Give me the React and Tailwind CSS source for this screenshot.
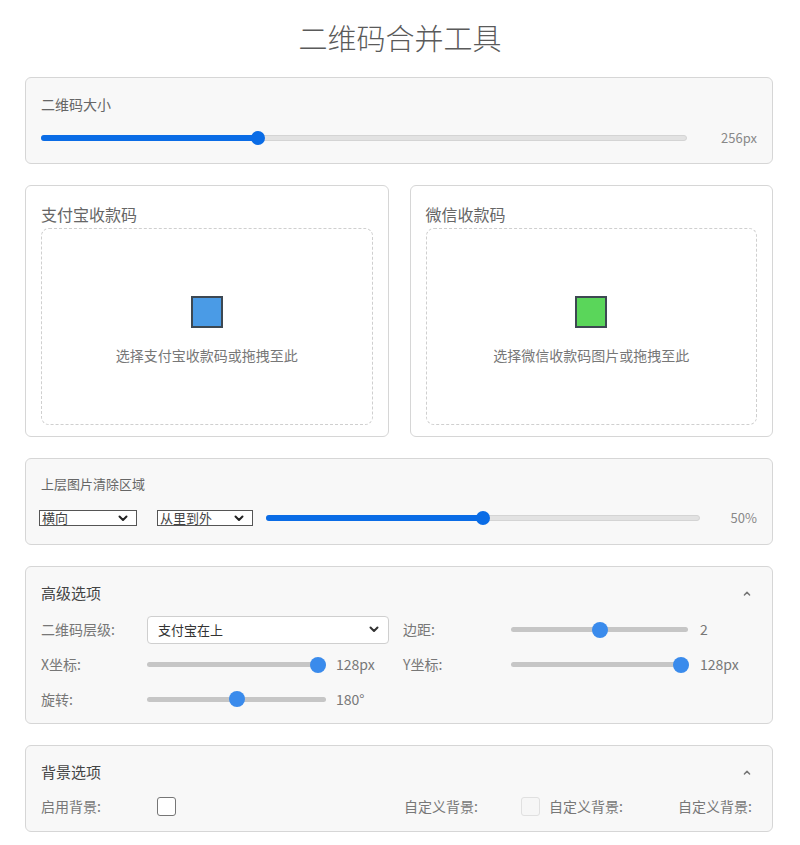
import React from 'react';

function Chevron({ up = false, className = '' }) {
	return (
		<svg width="10" height="7" viewBox="0 0 10 7" className={className} fill="none">
			<path
				d={up ? 'M1.5 5.5L5 2L8.5 5.5' : 'M1.5 1.5L5 5L8.5 1.5'}
				stroke="currentColor"
				strokeWidth="2"
				strokeLinecap="round"
				strokeLinejoin="round"
			/>
		</svg>
	);
}

// Slider drawn with divs; thumb position computed from pct
function Slider({ pct, filled = false, thumb = 14, track = 'h-[6px]', className = '' }) {
	const r = thumb / 2;
	const left = `calc(${r}px + ${pct / 100} * (100% - ${thumb}px))`;
	return (
		<div className={`relative h-[20px] flex items-center ${className}`}>
			<div className={`w-full ${track} rounded-full ${filled ? 'bg-[#e2e2e2] border border-[#d4d4d4]' : 'bg-[#c6c6c6]'}`} />
			{filled && (
				<div className={`absolute left-0 ${track} rounded-full bg-[#0a6ce6]`} style={{ width: left }} />
			)}
			<div
				className={`absolute top-1/2 -translate-x-1/2 -translate-y-1/2 rounded-full ${filled ? 'bg-[#0a6ce6]' : 'bg-[#3a8bec]'}`}
				style={{ left, width: thumb, height: thumb }}
			/>
		</div>
	);
}

function Panel({ className = '', children }) {
	return (
		<div className={`rounded-[6px] border border-[#d6d6d6] bg-[#f8f8f8] px-[15px] ${className}`}>
			{children}
		</div>
	);
}

function UploadCard({ label, hint, color }) {
	return (
		<div className="h-[252px] rounded-[6px] border border-[#d6d6d6] bg-white px-[15px] pt-[17px]">
			<div className="text-[16px] leading-[22px] text-[#666]">{label}</div>
			<div className="mt-[3px] h-[197px] rounded-[8px] border border-dashed border-[#cfcfcf] flex flex-col items-center pt-[67px]">
				<div className={`w-[32px] h-[32px] border-2 border-[#3d4852] ${color}`} />
				<div className="mt-[17px] text-[14px] leading-[20px] text-[#777]">{hint}</div>
			</div>
		</div>
	);
}

function PlainSelect({ value, className = '' }) {
	return (
		<div className={`h-[16px] border border-[#555] bg-white flex items-center justify-between pl-[2px] pr-[8px] ${className}`}>
			<span className="text-[13px] leading-[14px] text-[#444]">{value}</span>
			<Chevron className="text-[#222]" />
		</div>
	);
}

function Checkbox({ disabled = false }) {
	return (
		<div
			className={`w-[19px] h-[19px] rounded-[3px] border ${
				disabled ? 'border-[#e0e0e0] bg-[#f6f6f6]' : 'border-[#767676] bg-white'
			}`}
		/>
	);
}

export default function App() {
	return (
		<div className="w-[800px] min-h-[845px] bg-white font-['Noto_Sans_CJK_SC','Noto_Sans',sans-serif]">
			{/* Title */}
			<div className="h-[77px] pt-[16px] text-center text-[29px] leading-[42px] font-light text-[#5a5a5a]">
				二维码合并工具
			</div>

			<div className="ml-[25px] w-[748px] flex flex-col gap-[21px]">
				{/* QR size */}
				<Panel className="h-[87px] pt-[16px]">
					<div className="text-[14px] leading-[20px] text-[#666]">二维码大小</div>
					<div className="mt-[14px] flex items-center">
						<Slider pct={33.2} filled className="flex-1" />
						<div className="w-[70px] text-right text-[13px] text-[#888]">256px</div>
					</div>
				</Panel>

				{/* Upload cards */}
				<div className="grid grid-cols-2 gap-[21px]">
					<UploadCard label="支付宝收款码" hint="选择支付宝收款码或拖拽至此" color="bg-[#4a9be6]" />
					<UploadCard label="微信收款码" hint="选择微信收款码图片或拖拽至此" color="bg-[#5ad65a]" />
				</div>

				{/* Clear area */}
				<Panel className="h-[87px] pt-[15px]">
					<div className="text-[13px] leading-[20px] text-[#666]">上层图片清除区域</div>
					<div className="mt-[14px] -ml-[2px] flex items-center">
						<PlainSelect value="横向" className="w-[98px]" />
						<PlainSelect value="从里到外" className="w-[96px] ml-[20px]" />
						<Slider pct={50} filled className="flex-1 ml-[13px]" />
						<div className="w-[57px] text-right text-[13px] text-[#888]">50%</div>
					</div>
				</Panel>

				{/* Advanced */}
				<Panel className="h-[158px] pt-[16px]">
					<div className="flex items-center justify-between">
						<div className="text-[15px] leading-[20px] text-[#444]">高级选项</div>
						<Chevron up className="text-[#777] mr-[5px] scale-75" />
					</div>
					<div className="mt-[9px] text-[14px] text-[#777]">
						<div className="h-[35px] flex items-center">
							<div className="w-[106px]">二维码层级:</div>
							<div className="w-[256px]">
								<div className="w-[242px] h-[28px] rounded-[4px] border border-[#cfcfcf] bg-white flex items-center justify-between pl-[10px] pr-[9px]">
									<span className="text-[13px] text-[#333]">支付宝在上</span>
									<Chevron className="text-[#333]" />
								</div>
							</div>
							<div className="w-[108px]">边距:</div>
							<div className="flex-1 flex items-center">
								<Slider pct={50} thumb={16} track="h-[5px]" className="w-[177px]" />
								<div className="ml-[12px] text-[#777]">2</div>
							</div>
						</div>
						<div className="h-[35px] flex items-center">
							<div className="w-[106px]">X坐标:</div>
							<div className="w-[256px] flex items-center">
								<Slider pct={100} thumb={16} track="h-[5px]" className="w-[179px]" />
								<div className="ml-[10px]">128px</div>
							</div>
							<div className="w-[108px]">Y坐标:</div>
							<div className="flex-1 flex items-center">
								<Slider pct={100} thumb={16} track="h-[5px]" className="w-[178px]" />
								<div className="ml-[11px]">128px</div>
							</div>
						</div>
						<div className="h-[34px] flex items-center">
							<div className="w-[106px]">旋转:</div>
							<div className="w-[256px] flex items-center">
								<Slider pct={50} thumb={16} track="h-[5px]" className="w-[179px]" />
								<div className="ml-[10px]">180°</div>
							</div>
						</div>
					</div>
				</Panel>

				{/* Background */}
				<Panel className="h-[87px] pt-[16px]">
					<div className="flex items-center justify-between">
						<div className="text-[15px] leading-[20px] text-[#444]">背景选项</div>
						<Chevron up className="text-[#777] mr-[5px] scale-75" />
					</div>
					<div className="mt-[7px] h-[34px] flex items-center text-[14px] text-[#777]">
						<div className="w-[116px]">启用背景:</div>
						<Checkbox />
						<div className="ml-[228px] w-[117px]">自定义背景:</div>
						<Checkbox disabled />
						<div className="ml-[9px]">自定义背景:</div>
						<div className="ml-auto pr-[5px]">自定义背景:</div>
					</div>
				</Panel>
			</div>
		</div>
	);
}
